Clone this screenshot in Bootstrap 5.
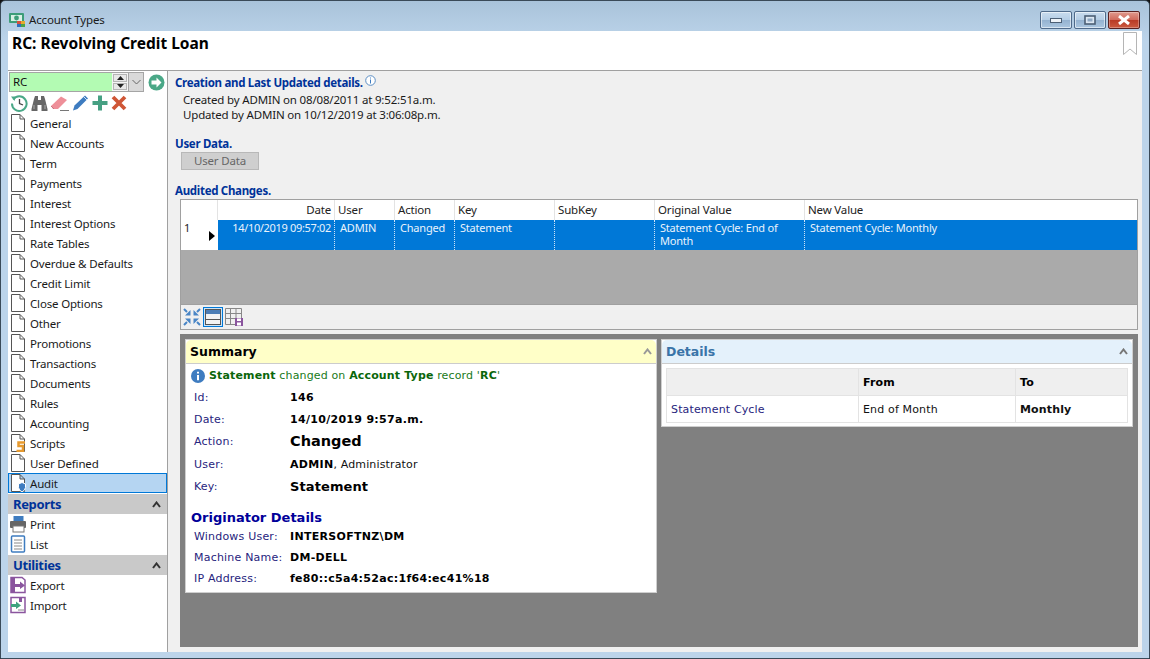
<!DOCTYPE html>
<html lang="en"><head><meta charset="utf-8"><title>Account Types</title>
<link href="https://cdn.jsdelivr.net/npm/bootstrap@5.3.0/dist/css/bootstrap.min.css" rel="stylesheet">
<style>
html,body{height:659px;width:1150px;overflow:hidden;background:#111;}
body{font-family:"Noto Sans","Liberation Sans",sans-serif;font-size:11.5px;letter-spacing:-.17px;color:#111;line-height:15px;}
.win{width:1150px;height:659px;border:1px solid #3a4a58;border-radius:5px 5px 0 0;background:linear-gradient(#a9c3da 0,#bcd4ea 40px,#bcd4ea 100%);padding:0 7px 6px 7px;}
.tbar{height:30px;flex:none;}
.wtitle{margin-left:2px;color:#1a1a1a;padding-top:7px;}
.capbtn{width:32px;height:18px;margin-top:8px;margin-left:2px;border:1px solid #4f6a8a;border-radius:2px;background:linear-gradient(#c9dcee 0,#b4cde5 50%,#94b2d0 51%,#abc6e0 100%);box-shadow:inset 0 0 0 1px rgba(255,255,255,.55);}
.capclose{width:32px;height:18px;margin-top:8px;margin-left:2px;margin-right:2px;border:1px solid #5a2020;border-radius:2px;background:linear-gradient(#e09a8e 0,#d0685a 50%,#b93a25 51%,#cc5a40 100%);box-shadow:inset 0 0 0 1px rgba(255,255,255,.3);}
.client{background:#fff;min-height:0;}
.hdr{height:40px;flex:none;border-bottom:1px solid #a0a0a0;padding:1px 4px 0 4px;}
.hdr h1{font-size:15.5px;font-weight:700;line-height:22px;margin:0;color:#000;letter-spacing:0;}
.bodyrow{min-height:0;}
.side{width:160px;flex:none;border-right:1px solid #a0a0a0;background:#fff;}
.combo{height:20px;margin:1px 0 0 1px;}
.cinput{width:103px;height:20px;background:#b3fbb3;border:1px solid #a5a5a5;border-right:0;padding:1px 3px;line-height:15px;}
.spin{width:16px;height:20px;background:#f4f4f4;border-top:1px solid #a5a5a5;border-bottom:1px solid #a5a5a5;padding:1px 1px;gap:1px;}
.spin span{flex:1;background:#e8e8e8;border:1px solid #b5b5b5;display:flex;align-items:center;justify-content:center;}
.cdrop{width:16px;height:20px;background:#d9d9d9;border:1px solid #a5a5a5;}
.tools{height:21px;padding:1px 0 0 2px;gap:1px;}
.tools svg{display:block;}
.nitem{height:20px;padding-left:2px;gap:4px;line-height:19px;color:#1a1a1a;}
.nitem svg{flex:none;}
.nsel{background:#b5d5f2;outline:1px solid #0078d7;outline-offset:-1px;height:20px;}
.nhead{height:20px;background:#c9c9c9;color:#003399;font-weight:700;font-size:13px;padding:0 6px 0 5px;letter-spacing:-.35px;}
.nhead2{margin-top:1px;}
.nhead3{margin-top:1px;}
.mainp{background:#f0f0f0;padding:0 4px 5px 7px;min-width:0;}
.sect{color:#003399;font-weight:700;line-height:15px;letter-spacing:-.3px;}
.sect1{margin-top:4px;margin-bottom:2px;}
.sect2{margin-top:14px;}
.sect3{margin-top:13px;margin-bottom:1px;}
.infoi{margin-left:2px;}
.sub{padding-left:8px;color:#1a1a1a;}
.ubtn{width:78px;height:18px;margin:1px 0 0 6px;background:#cfcfcf;border:1px solid #b8b8b8;color:#666;font-size:11.5px;line-height:16px;text-align:center;border-radius:0;padding:0;letter-spacing:-.17px;flex:none;}
.gridw{margin-left:5px;border:1px solid #a0a0a0;height:131px;flex:none;background:#aaa;}
.gridt{width:100%;table-layout:fixed;border-collapse:separate;border-spacing:0;margin:0;}
.gridt th{font-weight:400;background:#fff;height:20px;padding:0 3px;border-right:1px solid #e3e3e3;color:#222;line-height:18px;}
.gridt td{height:30px;background:#0078d7;color:#e9f3fc;padding:1px 5px 0;vertical-align:top;border-right:1px dotted #cfe3f6;line-height:13px;font-size:11px;letter-spacing:-.2px;}
.gridt td.rh{background:#fff;color:#222;border-right:0;padding:1px 3px;position:relative;}
.gridt td.last,.gridt th.last{border-right:0;}
.gridt td.dcol{padding-right:3px;letter-spacing:-.33px;}
.caret{position:absolute;left:28px;top:11px;width:0;height:0;border-left:6px solid #000;border-top:5px solid transparent;border-bottom:5px solid transparent;}
.gspace{height:54px;background:#aaa;}
.gfoot{height:25px;background:#f0f0f0;border-top:1px solid #a0a0a0;padding:1px 2px;gap:2px;}
.gsel{background:#cce4f7;border:1px solid #0078d7;width:20px;height:20px;display:flex;align-items:center;justify-content:center;}
.pane{margin:4px 0 0 5px;background:#808080;height:313px;padding:5px;gap:4px;flex:none;}
.wcard{width:472px;background:#fff;border:1px solid #cfcfcf;border-radius:0;font-family:"DejaVu Sans",Verdana,sans-serif;font-size:11px;letter-spacing:.15px;}
.hsum{height:254px;}
.hdet{height:88px;}
.cardh{height:24px;padding:0 4px;font-size:12.5px;font-weight:700;border-bottom:1px solid #ccc;border-radius:0;letter-spacing:0;flex:none;}
.chy{background:#ffffc8;color:#000;}
.chb{background:#e4f1fb;color:#3a74a8;}
.msg{padding:1px 5px 0;color:#197a19;height:22px;gap:4px;}
.msg svg{flex:none;}
.msg b{color:#0a660a;}
.kv{padding:0 8px;margin:0;}
.krow{display:flex;align-items:center;height:22px;}
.krow23{height:23px;}
.krow21{height:21px;}
.krow20{height:20px;}
.kl{width:96px;flex:none;color:#27247d;letter-spacing:.2px;}
.kv b{color:#000;letter-spacing:.3px;}
.kv b.bg1{font-size:14.5px;letter-spacing:0;}
.kv b.bg2{font-size:13px;letter-spacing:.1px;}
.orig{color:#000099;font-size:13px;font-weight:700;padding:0 5px;margin-top:12px;line-height:16px;letter-spacing:0;}
.dt{width:calc(100% - 8px);margin:4px 4px 0;table-layout:fixed;border-collapse:collapse;}
.dt th,.dt td{border:1px solid #e3e3e3;padding:0 4px;height:27px;vertical-align:middle;background:#fff;}
.dt th{background:#efefef;color:#000;font-weight:700;}
.dt .dlab{color:#27247d;}
</style></head><body>
<svg width="0" height="0" class="position-absolute"><defs>
<symbol id="doc" viewBox="0 0 16 18"><path d="M1.5.5H10L14.5 5V17.500H1.5Z M10 .5V5H14.500" fill="#fff" stroke="#555" stroke-width="1"/></symbol>
</defs></svg>
<div class="win d-flex flex-column">
 <div class="tbar d-flex align-items-center">
  <svg width="19" height="17" viewBox="0 0 19 17" class="mt-2"><rect x="1" y="1" width="15" height="10" rx="1" fill="#3d9d78"/><rect x="3" y="3" width="11" height="6" fill="#d9f0e4"/><circle cx="8.5" cy="6" r="2.400" fill="#3d9d78"/><rect x="9" y="9" width="4" height="3" fill="#d9503a"/><rect x="13" y="9" width="4" height="3" fill="#e3a92f"/><rect x="9" y="12" width="4" height="3" fill="#2f6fbe"/><rect x="13" y="12" width="4" height="3" fill="#4aa34a"/></svg>
  <div class="wtitle">Account Types</div>
  <div class="ms-auto d-flex">
   <div class="capbtn d-flex align-items-center justify-content-center"><svg width="12" height="5"><rect x=".5" y=".5" width="11" height="4" fill="#eef3f8" stroke="#4c5f75"/></svg></div>
   <div class="capbtn d-flex align-items-center justify-content-center"><svg width="12" height="10"><rect x="1" y="1" width="10" height="8" fill="#dce7f2" stroke="#4c5f75" stroke-width="1.6"/><rect x="3.5" y="3.5" width="5" height="3" fill="#8fa9c4"/></svg></div>
   <div class="capclose d-flex align-items-center justify-content-center"><svg width="14" height="10" viewBox="0 0 14 10"><path d="M2 1L12 9M12 1L2 9" stroke="#fff" stroke-width="3"/></svg></div>
  </div>
 </div>
 <div class="client flex-grow-1 d-flex flex-column">
  <div class="hdr d-flex justify-content-between">
   <h1>RC: Revolving Credit Loan</h1>
   <svg width="16" height="24" viewBox="0 0 16 24"><path d="M1.5.5H14.500V22.500L8 17L1.5 22.500Z" fill="#fff" stroke="#b5b5b5"/></svg>
  </div>
  <div class="bodyrow flex-grow-1 d-flex">
   <div class="side d-flex flex-column">
    <div class="combo d-flex align-items-center">
     <div class="cinput">RC</div>
     <div class="spin d-flex flex-column"><span><svg width="7" height="4"><path d="M3.5 0L7 4H0Z" fill="#222"/></svg></span><span><svg width="7" height="4"><path d="M0 0H7L3.500 4Z" fill="#222"/></svg></span></div>
     <div class="cdrop d-flex align-items-center justify-content-center"><svg width="9" height="6"><path d="M.5 1L4.500 5L8.500 1" fill="none" stroke="#666"/></svg></div>
     <svg width="17" height="17" viewBox="0 0 17 17" class="ms-1"><circle cx="8.5" cy="8.5" r="8" fill="#4aa887"/><path d="M3.5 6.500H8.500V3.500L13.500 8.500L8.500 13.500V10.500H3.500Z" fill="#fff"/></svg>
    </div>
    <div class="tools d-flex align-items-center">
     <svg width="19" height="18" viewBox="0 0 19 18"><path d="M3.3 5.500A7.300 7.300 0 1 1 2 9.500" fill="none" stroke="#4aa887" stroke-width="2"/><path d="M1 2.500L5.500 2.500 4.500 7Z" fill="#4aa887"/><path d="M9.5 5V9.500L13 11" fill="none" stroke="#444" stroke-width="1.300"/></svg>
     <svg width="19" height="18" viewBox="0 0 19 18"><path d="M5 2h3v4h3V2h3l1 3 2.500 10v2H11.500v-6h-4v6H1.500v-2L4 5Z" fill="#666"/><path d="M4 11v4M15 11v4" stroke="#aaa"/></svg>
     <svg width="20" height="18" viewBox="0 0 20 18"><path d="M1 12L11 2.500L17 6L8 15H3Z" fill="#ee8f99"/><path d="M10 16.500H19" stroke="#777"/><path d="M4 15L1 12" stroke="#c87480"/></svg>
     <svg width="19" height="18" viewBox="0 0 19 18"><path d="M2 16.500L3.500 11.500L14 1.500L17 4.500L6.500 15Z" fill="#3e7cc0"/><path d="M13 3L16 6" stroke="#d5e4f3"/></svg>
     <svg width="18" height="18" viewBox="0 0 18 18"><path d="M7 1.500H11V7H16.500V11H11V16.500H7V11H1.500V7H7Z" fill="#46a083"/></svg>
     <svg width="18" height="18" viewBox="0 0 18 18"><path d="M3 3L15 15M15 3L3 15" stroke="#cf5636" stroke-width="3.800"/></svg>
    </div>
    <div class="d-flex align-items-center nitem"><svg width="16" height="18"><use href="#doc"/></svg><span>General</span></div>
    <div class="d-flex align-items-center nitem"><svg width="16" height="18"><use href="#doc"/></svg><span>New Accounts</span></div>
    <div class="d-flex align-items-center nitem"><svg width="16" height="18"><use href="#doc"/></svg><span>Term</span></div>
    <div class="d-flex align-items-center nitem"><svg width="16" height="18"><use href="#doc"/></svg><span>Payments</span></div>
    <div class="d-flex align-items-center nitem"><svg width="16" height="18"><use href="#doc"/></svg><span>Interest</span></div>
    <div class="d-flex align-items-center nitem"><svg width="16" height="18"><use href="#doc"/></svg><span>Interest Options</span></div>
    <div class="d-flex align-items-center nitem"><svg width="16" height="18"><use href="#doc"/></svg><span>Rate Tables</span></div>
    <div class="d-flex align-items-center nitem"><svg width="16" height="18"><use href="#doc"/></svg><span>Overdue &amp; Defaults</span></div>
    <div class="d-flex align-items-center nitem"><svg width="16" height="18"><use href="#doc"/></svg><span>Credit Limit</span></div>
    <div class="d-flex align-items-center nitem"><svg width="16" height="18"><use href="#doc"/></svg><span>Close Options</span></div>
    <div class="d-flex align-items-center nitem"><svg width="16" height="18"><use href="#doc"/></svg><span>Other</span></div>
    <div class="d-flex align-items-center nitem"><svg width="16" height="18"><use href="#doc"/></svg><span>Promotions</span></div>
    <div class="d-flex align-items-center nitem"><svg width="16" height="18"><use href="#doc"/></svg><span>Transactions</span></div>
    <div class="d-flex align-items-center nitem"><svg width="16" height="18"><use href="#doc"/></svg><span>Documents</span></div>
    <div class="d-flex align-items-center nitem"><svg width="16" height="18"><use href="#doc"/></svg><span>Rules</span></div>
    <div class="d-flex align-items-center nitem"><svg width="16" height="18"><use href="#doc"/></svg><span>Accounting</span></div>
    <div class="d-flex align-items-center nitem"><svg width="16" height="18" viewBox="0 0 16 18"><use href="#doc" width="16" height="18"/><path d="M15 8.500H8.500V12H13V17H6.500" fill="none" stroke="#e79a2e" stroke-width="2.500"/></svg><span>Scripts</span></div>
    <div class="d-flex align-items-center nitem"><svg width="16" height="18"><use href="#doc"/></svg><span>User Defined</span></div>
    <div class="d-flex align-items-center nitem nsel"><svg width="16" height="18" viewBox="0 0 16 18"><use href="#doc" width="16" height="18"/><path d="M8.500 10L12 8.500L15.500 10V13.500Q15 16.500 12 18Q9 16.500 8.500 13.500Z" fill="#3e7cc0" stroke="#fff"/></svg><span>Audit</span></div>
    <div class="nhead nhead2 d-flex align-items-center justify-content-between"><span>Reports</span><svg width="9" height="7"><path d="M1 6L4.500 1.500L8 6" fill="none" stroke="#333" stroke-width="2"/></svg></div>
    <div class="d-flex align-items-center nitem"><svg width="16" height="18" viewBox="0 0 16 18"><rect x="3.500" y="1" width="10" height="5" fill="#3e7cc0"/><rect x="0" y="6" width="16" height="7" rx="1" fill="#666"/><rect x="3" y="11" width="11" height="6" fill="#fff" stroke="#777"/></svg><span>Print</span></div>
    <div class="d-flex align-items-center nitem"><svg width="16" height="18" viewBox="0 0 16 18"><rect x="1.500" y="1" width="13" height="16" rx="1" fill="#fff" stroke="#3e7cc0" stroke-width="1.500"/><path d="M4 5H12M4 8H12M4 11H12M4 14H12" stroke="#888"/></svg><span>List</span></div>
    <div class="nhead nhead3 d-flex align-items-center justify-content-between"><span>Utilities</span><svg width="9" height="7"><path d="M1 6L4.500 1.500L8 6" fill="none" stroke="#333" stroke-width="2"/></svg></div>
    <div class="d-flex align-items-center nitem"><svg width="16" height="18" viewBox="0 0 16 18"><path d="M1 1.500H12L15 4V16.500H1Z" fill="#fff" stroke="#8a559e" stroke-width="1.500"/><rect x="1" y="1" width="4" height="16" fill="#8a559e"/><path d="M5 8H10V5.500L15 9.500L10 13V11H5Z" fill="#8a559e"/></svg><span>Export</span></div>
    <div class="d-flex align-items-center nitem"><svg width="16" height="18" viewBox="0 0 16 18"><path d="M1 1.500H15V16.500H1Z" fill="#fff" stroke="#8a559e" stroke-width="1.500"/><rect x="9" y="1" width="3" height="5" fill="#8a559e"/><path d="M1 8H6V5.500L11 9.500L6 13V11H1Z" fill="#3ea37f"/><path d="M8 14H14" stroke="#888"/></svg><span>Import</span></div>
   </div>
   <div class="mainp flex-grow-1 d-flex flex-column">
    <div class="sect sect1 d-flex align-items-start"><span>Creation and Last Updated details.</span><svg width="11" height="11" class="infoi"><circle cx="5.500" cy="5.500" r="4.800" fill="#fff" stroke="#5b8ec4"/><path d="M5.500 2.500v1M5.500 4.500v4" stroke="#3e7cc0"/></svg></div>
    <div class="sub">Created by ADMIN on 08/08/2011 at 9:52:51a.m.</div>
    <div class="sub">Updated by ADMIN on 10/12/2019 at 3:06:08p.m.</div>
    <div class="sect sect2">User Data.</div>
    <button type="button" class="btn ubtn">User Data</button>
    <div class="sect sect3">Audited Changes.</div>
    <div class="gridw d-flex flex-column">
     <table class="gridt"><colgroup><col style="width:37px"><col style="width:117px"><col style="width:60px"><col style="width:60px"><col style="width:100px"><col style="width:100px"><col style="width:150px"><col></colgroup>
      <thead><tr><th></th><th class="text-end">Date</th><th>User</th><th>Action</th><th>Key</th><th>SubKey</th><th>Original Value</th><th class="last">New Value</th></tr></thead>
      <tbody><tr><td class="rh">1<span class="caret"></span></td><td class="text-end dcol">14/10/2019 09:57:02</td><td>ADMIN</td><td>Changed</td><td>Statement</td><td></td><td>Statement Cycle: End of Month</td><td class="last">Statement Cycle: Monthly</td></tr></tbody>
     </table>
     <div class="gspace"></div>
     <div class="gfoot d-flex align-items-center">
      <svg width="18" height="18" viewBox="0 0 18 18"><g fill="#4a86c6"><path d="M7.500 7.500V2L2 7.500Z M10.500 7.500V2L16 7.500Z M7.500 10.500V16L2 10.500Z M10.500 10.500V16L16 10.500Z"/></g><path d="M1 1L4 4M17 1L14 4M1 17L4 14M17 17L14 14" stroke="#4a86c6" stroke-width="2"/></svg>
      <div class="gsel"><svg width="16" height="16" viewBox="0 0 16 16"><rect x=".5" y=".5" width="15" height="15" fill="#f3f3f3" stroke="#555"/><rect x="1" y="1" width="14" height="4" fill="#4c7db5"/><path d="M1 10.500H15" stroke="#555"/></svg></div>
      <svg width="18" height="18" viewBox="0 0 18 18"><path d="M.5.5H16.500V10M.5.5V16.500H10M.5 5.500H16.500M.5 10.500H10M5.500.5V16.500M11 .5V10" fill="none" stroke="#888"/><rect x="10" y="10" width="8" height="8" fill="#8a559e"/><rect x="12" y="10.500" width="4" height="2.500" fill="#fff"/><rect x="12" y="14.500" width="4" height="3" fill="#fff"/></svg>
     </div>
    </div>
    <div class="pane d-flex align-items-start">
     <div class="card wcard hsum">
      <div class="card-header cardh chy d-flex align-items-center justify-content-between"><span>Summary</span><svg width="9" height="7"><path d="M1 6L4.500 1.500L8 6" fill="none" stroke="#999" stroke-width="2"/></svg></div>
      <div class="msg d-flex align-items-center"><svg width="14" height="14"><circle cx="7" cy="7" r="7" fill="#3e7cc0"/><path d="M7 2.800v1.800M7 6v5.200" stroke="#fff" stroke-width="2"/></svg><span><b>Statement</b> changed on <b>Account Type</b> record '<b>RC</b>'</span></div>
      <div class="kv">
       <div class="krow"><span class="kl">Id:</span><b>146</b></div>
       <div class="krow"><span class="kl">Date:</span><b>14/10/2019 9:57a.m.</b></div>
       <div class="krow krow23"><span class="kl">Action:</span><b class="bg1">Changed</b></div>
       <div class="krow"><span class="kl">User:</span><span><b>ADMIN</b>, Administrator</span></div>
       <div class="krow krow23"><span class="kl">Key:</span><b class="bg2">Statement</b></div>
      </div>
      <div class="orig">Originator Details</div>
      <div class="kv">
       <div class="krow krow21"><span class="kl">Windows User:</span><b>INTERSOFTNZ\DM</b></div>
       <div class="krow krow21"><span class="kl">Machine Name:</span><b>DM-DELL</b></div>
       <div class="krow krow20"><span class="kl">IP Address:</span><b>fe80::c5a4:52ac:1f64:ec41%18</b></div>
      </div>
     </div>
     <div class="card wcard hdet">
      <div class="card-header cardh chb d-flex align-items-center justify-content-between"><span>Details</span><svg width="9" height="7"><path d="M1 6L4.500 1.500L8 6" fill="none" stroke="#777" stroke-width="2"/></svg></div>
      <table class="dt"><colgroup><col style="width:192px"><col style="width:157px"><col></colgroup>
       <thead><tr><th></th><th>From</th><th>To</th></tr></thead>
       <tbody><tr><td class="dlab">Statement Cycle</td><td>End of Month</td><td><b>Monthly</b></td></tr></tbody>
      </table>
     </div>
    </div>
   </div>
  </div>
 </div>
</div>
<script src="https://cdn.jsdelivr.net/npm/bootstrap@5.3.0/dist/js/bootstrap.bundle.min.js"></script>
</body></html>
